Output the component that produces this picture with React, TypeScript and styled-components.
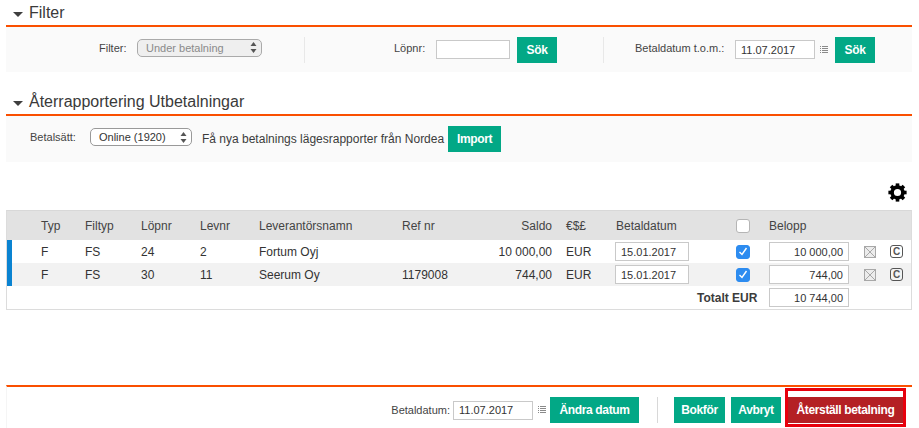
import React from "react";
import styled, { createGlobalStyle } from "styled-components";

const GlobalStyle = createGlobalStyle`
  html, body {
    margin: 0;
    padding: 0;
    background: #fff;
    overflow: hidden;
  }
  body {
    font-family: "Liberation Sans", Arial, sans-serif;
    font-size: 12px;
    color: #3c3c3c;
  }
`;

const Page = styled.div`
  width: 919px;
  height: 428px;
  display: flex;
  flex-direction: column;
  overflow: hidden;
`;

const Section = styled.section<{ $gap?: number }>`
  margin: ${(p) => p.$gap ?? 0}px 7px 0 6px;
`;

const SectionHeader = styled.div`
  height: 25px;
  display: flex;
  align-items: center;
  gap: 6px;
  padding-left: 7px;
  border-bottom: 2px solid #fa4f00;
`;

const Caret = styled.span`
  width: 0;
  height: 0;
  margin-top: 3px;
  border-left: 5px solid transparent;
  border-right: 5px solid transparent;
  border-top: 5px solid #3f3f3f;
`;

const SectionTitle = styled.h2`
  margin: 0;
  font-size: 16px;
  font-weight: 400;
  color: #3a3a3a;
`;

const FilterPanel = styled.div`
  height: 45px;
  background: #fafafa;
  display: grid;
  grid-template-columns: 298px 299px 1fr;
  align-items: center;
`;

const FilterGroup = styled.div<{ $indent: number; $divider?: boolean }>`
  height: 26px;
  display: flex;
  align-items: center;
  padding-left: ${(p) => p.$indent}px;
  border-left: ${(p) => (p.$divider ? "1px solid #e8e8e8" : "none")};
`;

const Label = styled.span<{ $width?: number }>`
  font-size: 11px;
  color: #444;
  width: ${(p) => (p.$width ? `${p.$width}px` : "auto")};
  flex-shrink: 0;
  margin-bottom: 4px;
`;

const SelectBox = styled.div<{ $width: number; $disabled?: boolean }>`
  box-sizing: border-box;
  width: ${(p) => p.$width}px;
  height: 18px;
  margin-bottom: 4px;
  display: flex;
  align-items: center;
  justify-content: space-between;
  padding: 0 4px 0 8px;
  font-size: 11px;
  color: ${(p) => (p.$disabled ? "#8a8a8a" : "#333")};
  background: ${(p) => (p.$disabled ? "#efefef" : "#fff")};
  border: 1px solid ${(p) => (p.$disabled ? "#aaa" : "#999")};
  border-radius: 5px;
`;

const TextInput = styled.div<{ $width: number }>`
  box-sizing: border-box;
  width: ${(p) => p.$width}px;
  height: 19px;
  display: flex;
  align-items: center;
  padding: 0 5px;
  background: #fff;
  border: 1px solid #c9c9c9;
  font-size: 11px;
  color: #333;
  flex-shrink: 0;
`;

const AmountInput = styled(TextInput)`
  justify-content: flex-end;
`;

const Button = styled.button<{ $width: number; $danger?: boolean; $space?: number }>`
  box-sizing: border-box;
  width: ${(p) => p.$width}px;
  height: 26px;
  flex-shrink: 0;
  margin-left: ${(p) => p.$space ?? 0}px;
  padding: 0;
  border: 0;
  background: ${(p) => (p.$danger ? "#b42024" : "#02a886")};
  color: #fff;
  font-family: inherit;
  font-size: 12px;
  font-weight: 700;
  letter-spacing: -0.35px;
`;

const PaymentPanel = styled.div`
  height: 46px;
  background: #fafafa;
  display: flex;
  align-items: center;
  padding: 0 0 0 24px;
  box-sizing: border-box;
`;

const PaymentText = styled.span`
  font-size: 12px;
  color: #3c3c3c;
  margin: 0 4px 0 10px;
`;

const GearRow = styled.div`
  margin: 21px 7px 0 6px;
  height: 27px;
  display: flex;
  justify-content: flex-end;
  align-items: flex-start;
  padding-right: 5px;
`;

const Table = styled.div`
  margin: 0 7px 0 6px;
  border: 1px solid #dcdcdc;
  border-top: 1px solid #d8d8d8;
`;

const GridRow = styled.div`
  display: grid;
  grid-template-columns: 34px 44px 56px 59px 59px 143px 68px 82px 14px 49px 121px 33px 95px 26px 1fr;
  align-items: center;
`;

const HeadRow = styled(GridRow)`
  height: 29px;
  background: #e2e2e2;
  font-size: 12px;
  color: #444;
`;

const BodyRow = styled(GridRow)<{ $odd?: boolean }>`
  height: 23px;
  font-size: 12px;
  color: #333;
  background: ${(p) => (p.$odd ? "#f2f2f2" : "#fff")};
  box-shadow: inset 5px 0 0 #0a83d1;
`;

const TotalRow = styled.div`
  height: 23px;
  display: flex;
  align-items: center;
  padding-left: 690px;
  gap: 11px;
`;

const TotalLabel = styled.strong`
  font-size: 12px;
  width: 61px;
  color: #3c3c3c;
  white-space: nowrap;
`;

const Right = styled.span`
  text-align: right;
`;

const HeadCell = styled.span<{ $inset?: number }>`
  padding-left: ${(p) => p.$inset ?? 0}px;
`;

const Box = styled.span<{ $checked?: boolean }>`
  box-sizing: border-box;
  width: 14px;
  height: 14px;
  border-radius: 3px;
  display: flex;
  align-items: center;
  justify-content: center;
  background: ${(p) => (p.$checked ? "#2d8cf0" : "#fff")};
  border: 1px solid ${(p) => (p.$checked ? "#2d8cf0" : "#b5b5b5")};
`;

const CopyIcon = styled.span`
  box-sizing: border-box;
  width: 13px;
  height: 13px;
  border: 1px solid #555;
  border-radius: 3px;
  display: flex;
  align-items: center;
  justify-content: center;
  font-size: 10px;
  font-weight: 700;
  line-height: 1;
  color: #555;
`;

const Spacer = styled.div`
  flex: 1;
`;

const Footer = styled.footer`
  margin: 0 7px 0 6px;
  height: 43px;
  box-sizing: border-box;
  border-top: 2px solid #fa4f00;
  border-left: 1px solid #f5f5f5;
  display: flex;
  align-items: flex-start;
  justify-content: flex-end;
  padding: 1px 6px 0 0;
`;

const FooterRow = styled.div`
  margin-top: 9px;
  display: flex;
  align-items: center;
`;

const FooterLabel = styled.span`
  font-size: 11px;
  color: #444;
  margin-right: 3px;
`;

const FooterDivider = styled.span`
  width: 1px;
  height: 26px;
  background: #d8d8d8;
  margin: 0 16px 0 18px;
`;

const Highlight = styled.span`
  display: flex;
  margin-left: 4px;
  padding: 6px 0 1px;
  border: 3px solid #e8000d;
`;

const ListGlyph = styled.svg`
  margin: 0 4px 0 5px;
  flex-shrink: 0;
`;

const ListIcon = () => (
  <ListGlyph width="8" height="8" viewBox="0 0 8 8" fill="none" stroke="#8a8a8a" strokeWidth="1">
    <path d="M0 .5h1M0 2.5h1M0 4.5h1M0 6.5h1M2 .5h6M2 2.5h6M2 4.5h6M2 6.5h6" />
  </ListGlyph>
);

const UpDown = () => (
  <svg width="7" height="11" viewBox="0 0 7 11" fill="#555">
    <path d="M3.5 0 6.5 4H.5zM3.5 11 .5 7h6z" />
  </svg>
);

const Check = () => (
  <svg width="10" height="9" viewBox="0 0 10 9" fill="none" stroke="#fff" strokeWidth="1.4">
    <path d="M1.5 5 4 7.5 8.5 1" />
  </svg>
);

const CrossBox = () => (
  <svg width="12" height="12" viewBox="0 0 12 12" fill="#ececec" stroke="#a8a8a8" strokeWidth="1">
    <rect x=".5" y=".5" width="11" height="11" />
    <path d="M1 1l10 10M11 1 1 11" />
  </svg>
);

const Gear = () => (
  <svg width="19" height="19" viewBox="0 0 19 19" fill="#000">
    <circle cx="9.5" cy="9.5" r="5.4" fill="none" stroke="#000" strokeWidth="3.6" />
    {[0, 45, 90, 135, 180, 225, 270, 315].map((a) => (
      <rect key={a} x="7.7" y="0.4" width="3.6" height="4" transform={`rotate(${a} 9.5 9.5)`} />
    ))}
  </svg>
);

const rows = [
  { typ: "F", fil: "FS", lop: "24", lev: "2", name: "Fortum Oyj", ref: "", saldo: "10 000,00" },
  { typ: "F", fil: "FS", lop: "30", lev: "11", name: "Seerum Oy", ref: "1179008", saldo: "744,00" },
];

export default function App() {
  return (
    <Page>
      <GlobalStyle />
      <Section>
        <SectionHeader>
          <Caret />
          <SectionTitle>Filter</SectionTitle>
        </SectionHeader>
        <FilterPanel>
          <FilterGroup $indent={93}>
            <Label $width={38}>Filter:</Label>
            <SelectBox $width={125} $disabled>
              Under betalning
              <UpDown />
            </SelectBox>
          </FilterGroup>
          <FilterGroup $indent={89} $divider>
            <Label $width={42}>Löpnr:</Label>
            <TextInput $width={74} />
            <Button $width={40} $space={7}>
              Sök
            </Button>
          </FilterGroup>
          <FilterGroup $indent={31} $divider>
            <Label $width={100}>Betaldatum t.o.m.:</Label>
            <TextInput $width={80}>11.07.2017</TextInput>
            <ListIcon />
            <Button $width={40} $space={3}>
              Sök
            </Button>
          </FilterGroup>
        </FilterPanel>
      </Section>

      <Section $gap={17}>
        <SectionHeader>
          <Caret />
          <SectionTitle>Återrapportering Utbetalningar</SectionTitle>
        </SectionHeader>
        <PaymentPanel>
          <Label $width={60}>Betalsätt:</Label>
          <SelectBox $width={102}>
            Online (1920)
            <UpDown />
          </SelectBox>
          <PaymentText>Få nya betalnings lägesrapporter från Nordea</PaymentText>
          <Button $width={53}>Import</Button>
        </PaymentPanel>
      </Section>

      <GearRow>
        <Gear />
      </GearRow>

      <Table>
        <HeadRow>
          <span />
          <span>Typ</span>
          <span>Filtyp</span>
          <span>Löpnr</span>
          <span>Levnr</span>
          <span>Leverantörsnamn</span>
          <span>Ref nr</span>
          <Right>Saldo</Right>
          <span />
          <span>€$£</span>
          <HeadCell $inset={1}>Betaldatum</HeadCell>
          <Box />
          <span>Belopp</span>
          <span />
          <span />
        </HeadRow>
        {rows.map((r, i) => (
          <BodyRow key={r.lop} $odd={i % 2 === 1}>
            <span />
            <span>{r.typ}</span>
            <span>{r.fil}</span>
            <span>{r.lop}</span>
            <span>{r.lev}</span>
            <span>{r.name}</span>
            <span>{r.ref}</span>
            <Right>{r.saldo}</Right>
            <span />
            <span>EUR</span>
            <TextInput $width={74}>15.01.2017</TextInput>
            <Box $checked>
              <Check />
            </Box>
            <AmountInput $width={80}>{r.saldo}</AmountInput>
            <CrossBox />
            <CopyIcon>C</CopyIcon>
          </BodyRow>
        ))}
        <TotalRow>
          <TotalLabel>Totalt EUR</TotalLabel>
          <AmountInput $width={80}>10 744,00</AmountInput>
        </TotalRow>
      </Table>

      <Spacer />

      <Footer>
        <FooterRow>
          <FooterLabel>Betaldatum:</FooterLabel>
          <TextInput $width={80}>11.07.2017</TextInput>
          <ListIcon />
          <Button $width={89}>Ändra datum</Button>
          <FooterDivider />
          <Button $width={51}>Bokför</Button>
          <Button $width={50} $space={6}>
            Avbryt
          </Button>
        </FooterRow>
        <Highlight>
          <Button $width={115} $danger>
            Återställ betalning
          </Button>
        </Highlight>
      </Footer>
    </Page>
  );
}
